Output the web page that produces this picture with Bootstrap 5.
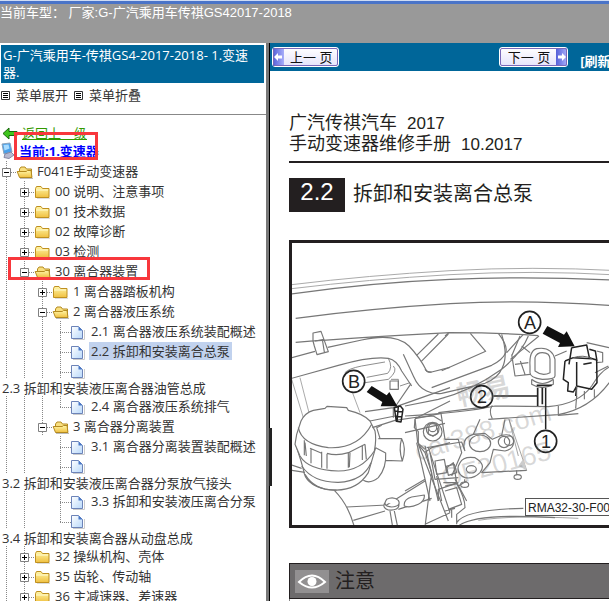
<!DOCTYPE html>
<html lang="zh-CN">
<head>
<meta charset="utf-8">
<meta name="viewport" content="width=device-width, initial-scale=1">
<title>G-广汽乘用车传祺GS4 2017-2018 维修手册</title>
<link rel="stylesheet" href="https://cdn.jsdelivr.net/npm/bootstrap@5.3.0/dist/css/bootstrap.min.css">
<style>
body{font:13px/17px "Open Sans","Noto Sans","Noto Sans CJK SC",sans-serif;color:#333;background:#fff}
.top-bar{flex:0 0 43px;background:#999;color:#fff;font-family:"Liberation Sans","Noto Sans CJK SC",sans-serif}
.top-bar::before{content:"";display:block;height:4px;background:linear-gradient(#cfdcf4 0 1px,#4a74c8 1px)}
.side{flex:0 0 266px;border-top:2px solid #fff}
.side-title{background:#069;color:#fff;margin:0 2px 0 1px;padding:2px 2px}
.side-tools{height:32px;border-bottom:1px solid #888;padding-left:1px}
.tool-btn{border:0;background:none;padding:0;color:#333}
.tool-btn svg{margin-right:6px}
.tool-btn + .tool-btn{margin-left:6px}
.splitter{flex:0 0 4px;background:linear-gradient(to right,#777 0 3px,#000 3px)}
.splitter-grip{left:3px;top:385px;width:3px;height:58px;background:#222}
.main-bar{height:28px;background:#069;padding:0 0 0 2px}
.page-btn{height:20px;border:1px solid #fff;outline:1px solid #7a68b8;outline-offset:-2px;border-radius:3px;background:linear-gradient(#fff,#e4e3fa);padding:0;color:#111;font-family:"Liberation Sans","Noto Sans CJK SC",sans-serif;font-size:13px}
.page-btn svg{display:block}
.page-btn span{padding:0 5px 0 6px}
.next-gap{margin-left:160px}
.next-gap span{padding:0 6px 0 8px}
.refresh{color:#fff;font-weight:bold;margin-left:12px}
.tree{padding-top:9px}
.tree li{height:20px;display:flex;align-items:center;white-space:nowrap;position:relative}
.tree li.short{height:18px}
.tree li.wrapped{height:17px;padding-left:2px}
.tree a{color:#333;text-decoration:none;margin-left:1px;line-height:18px}
.tree a.chosen{background:#c1d2ee;padding:0 2px;margin-left:-1px}
.tree li.back{height:17px}
.tree .back a{color:#390;text-decoration:underline;margin-left:2px}
.tree .here a{color:#00f;font-weight:bold}
.gut{flex:0 0 18px;height:100%;position:relative}
.line,.leaf,.end{background:repeating-linear-gradient(#888 0 1px,transparent 1px 2px) 6px 0/1px 100% no-repeat}
.leaf,.end{background:repeating-linear-gradient(#888 0 1px,transparent 1px 2px) 6px 0/1px 100% no-repeat,repeating-linear-gradient(to right,#888 0 1px,transparent 1px 2px) 6px 11px/11px 1px no-repeat}
.end{background-size:1px 12px,11px 1px}
.knob{border:0;padding:0;background:repeating-linear-gradient(#888 0 1px,transparent 1px 2px) 6px 0/1px 100% no-repeat,repeating-linear-gradient(to right,#888 0 1px,transparent 1px 2px) 11px 11px/6px 1px no-repeat}
.tree svg{flex:none;display:block}
.tree svg,symbol{overflow:visible}
.frame-red{position:absolute;border:3px solid #f8373c;pointer-events:none}
.frame-here{left:14px;top:-9px;width:84px;height:28px}
.frame-clutch{left:8px;top:-4px;width:142px;height:23px}
.doc{padding:42px 0 0 19px;color:#231f20;font-family:"Liberation Sans","Noto Sans CJK SC",sans-serif}
.doc-head{font-size:18px;line-height:21px;border-bottom:2px solid #231f20;padding-bottom:6px;white-space:nowrap}
.doc-head .num{font-size:17px;margin-left:10px}
.chap{padding:15px 0 28px}
.chap-no{background:#231f20;color:#fff;font-size:24px;line-height:28px;width:56px;height:34px}
.chap h1{font-size:20px;line-height:32px;margin:0 0 0 8px;font-weight:400}
.figure-box{border:3px solid #231f20;border-right:0;height:288px;margin-bottom:35px}
.notice{background:#6d6b6c;border:1px solid #231f20;border-right:0;height:36px;padding-left:5px}
.notice h2{font-size:20px;font-weight:400;line-height:30px;margin:0 0 0 6px}
.notice-body{border-left:1px solid #888;height:40px}
</style>
<script src="https://cdn.jsdelivr.net/npm/bootstrap@5.3.0/dist/js/bootstrap.bundle.min.js"></script>
</head>
<body class="vh-100 overflow-hidden d-flex flex-column">
<svg width="0" height="0" class="position-absolute" aria-hidden="true">
<defs>
<linearGradient id="gold" x2="0" y2="1"><stop stop-color="#fff6a8"/><stop offset="1" stop-color="#f0c040"/></linearGradient>
<linearGradient id="paper" x2="1" y2="1"><stop stop-color="#fff"/><stop offset="1" stop-color="#b8d8fa"/></linearGradient>
<linearGradient id="lilac" x2="1"><stop stop-color="#5560d8"/><stop offset="1" stop-color="#a8aefa"/></linearGradient>
<symbol id="plus" viewBox="0 0 18 20"><path d="M2.500 7.500h8v8h-8z" fill="#fff" stroke="#808080"/><path d="M4 11.500h5M6.500 9v5" stroke="#000"/></symbol>
<symbol id="minus" viewBox="0 0 18 20"><path d="M2.500 7.500h8v8h-8z" fill="#fff" stroke="#808080"/><path d="M4 11.500h5" stroke="#000"/></symbol>
<symbol id="folder" viewBox="0 0 18 20"><path d="M1 17h13v1H1z" fill="#ddd"/><path d="M-.5 7.500l1-2h4.500l1.500 2h6.500v9h-13.500z" fill="url(#gold)" stroke="#bf9020"/><path d="M0 9h12" stroke="#fffbd0"/></symbol>
<symbol id="folder-open" viewBox="0 0 18 20"><path d="M2 17.500h13" stroke="#bbb"/><path d="M1.500 15v-7l1.500-2h4l1.500 2h5v8z" fill="#f9e080" stroke="#b48a20"/><path d="M-.8 10.500h9l1.300-1h3.500l1 7h-12.500z" fill="url(#gold)" stroke="#b48a20"/></symbol>
<symbol id="page" viewBox="0 0 18 20"><path d="M1 18.500h11.500V9" stroke="#ccc" fill="none"/><path d="M-.5 5.500h7l4 4v8h-11z" fill="url(#paper)" stroke="#6c83b8"/><path d="M6.500 5.500v4h4z" fill="#4878c8"/></symbol>
</defs>
</svg>

<header class="top-bar"><div>当前车型： 厂家:G-广汽乘用车传祺GS42017-2018</div></header>

<div class="d-flex flex-grow-1 overflow-hidden">
<nav class="side overflow-hidden" aria-label="目录">
<div class="side-title">G-广汽乘用车-传祺GS4-2017-2018- 1.变速器.</div>
<div class="side-tools d-flex align-items-start pt-1">
<button type="button" class="tool-btn d-flex align-items-center"><svg width="9" height="9"><path d="M.5.500h8v8h-8z" fill="#fff" stroke="#333"/><path d="M2 2.500h5M2 4.500h5M2 6.500h5" stroke="#000"/></svg>菜单展开</button>
<button type="button" class="tool-btn d-flex align-items-center"><svg width="9" height="9"><path d="M.5.500h8v8h-8z" fill="#fff" stroke="#333"/><path d="M2 2.500h5M2 4.500h5M2 6.500h5" stroke="#000"/></svg>菜单折叠</button>
</div>
<ul class="tree list-unstyled m-0">
<li class="back"><svg width="20" height="17"><path d="M3 9.500L9 4v3.500h8l-2 2 2 2H9V15z" fill="#3fc51c" stroke="#17680a"/></svg><a href="#">返回上一级</a></li>
<li class="here"><svg width="18" height="20"><path d="M2 3l8-1 2 9-8 2z" fill="#4aa0ea" stroke="#8ba2ba"/><path d="M3.500 4l5-.5 1 4-5 2z" fill="#a9dcff"/><path d="M5 13l6-2 3 3-5 3.500-5-1z" fill="#b7b9d0" stroke="#8587a4"/></svg><a href="#">当前:1.变速器</a><span class="frame-red frame-here"></span></li>
<li><button type="button" class="gut knob" aria-label="折叠"><svg width="18" height="20"><use href="#minus"/></svg></button><svg width="18" height="20"><use href="#folder-open"/></svg><a href="#">F041E手动变速器</a></li>
<li><i class="gut line"></i><button type="button" class="gut knob" aria-label="展开"><svg width="18" height="20"><use href="#plus"/></svg></button><svg width="18" height="20"><use href="#folder"/></svg><a href="#">00 说明、注意事项</a></li>
<li><i class="gut line"></i><button type="button" class="gut knob" aria-label="展开"><svg width="18" height="20"><use href="#plus"/></svg></button><svg width="18" height="20"><use href="#folder"/></svg><a href="#">01 技术数据</a></li>
<li><i class="gut line"></i><button type="button" class="gut knob" aria-label="展开"><svg width="18" height="20"><use href="#plus"/></svg></button><svg width="18" height="20"><use href="#folder"/></svg><a href="#">02 故障诊断</a></li>
<li><i class="gut line"></i><button type="button" class="gut knob" aria-label="展开"><svg width="18" height="20"><use href="#plus"/></svg></button><svg width="18" height="20"><use href="#folder"/></svg><a href="#">03 检测</a></li>
<li><i class="gut line"></i><button type="button" class="gut knob" aria-label="折叠"><svg width="18" height="20"><use href="#minus"/></svg></button><svg width="18" height="20"><use href="#folder-open"/></svg><a href="#">30 离合器装置</a><span class="frame-red frame-clutch"></span></li>
<li><i class="gut line"></i><i class="gut line"></i><button type="button" class="gut knob" aria-label="展开"><svg width="18" height="20"><use href="#plus"/></svg></button><svg width="18" height="20"><use href="#folder"/></svg><a href="#">1 离合器踏板机构</a></li>
<li><i class="gut line"></i><i class="gut line"></i><button type="button" class="gut knob" aria-label="折叠"><svg width="18" height="20"><use href="#minus"/></svg></button><svg width="18" height="20"><use href="#folder-open"/></svg><a href="#">2 离合器液压系统</a></li>
<li><i class="gut line"></i><i class="gut line"></i><i class="gut line"></i><i class="gut leaf"></i><svg width="18" height="20"><use href="#page"/></svg><a href="#">2.1 离合器液压系统装配概述</a></li>
<li><i class="gut line"></i><i class="gut line"></i><i class="gut line"></i><i class="gut leaf"></i><svg width="18" height="20"><use href="#page"/></svg><a href="#" class="chosen">2.2 拆卸和安装离合总泵</a></li>
<li class="short"><i class="gut line"></i><i class="gut line"></i><i class="gut line"></i><i class="gut leaf"></i><svg width="18" height="20"><use href="#page"/></svg></li>
<li class="wrapped"><a href="#" class="m-0">2.3 拆卸和安装液压离合器油管总成</a></li>
<li><i class="gut line"></i><i class="gut line"></i><i class="gut line"></i><i class="gut end"></i><svg width="18" height="20"><use href="#page"/></svg><a href="#">2.4 离合器液压系统排气</a></li>
<li><i class="gut line"></i><i class="gut line"></i><button type="button" class="gut knob" aria-label="折叠"><svg width="18" height="20"><use href="#minus"/></svg></button><svg width="18" height="20"><use href="#folder-open"/></svg><a href="#">3 离合器分离装置</a></li>
<li><i class="gut line"></i><i class="gut line"></i><i class="gut"></i><i class="gut leaf"></i><svg width="18" height="20"><use href="#page"/></svg><a href="#">3.1 离合器分离装置装配概述</a></li>
<li class="short"><i class="gut line"></i><i class="gut line"></i><i class="gut"></i><i class="gut leaf"></i><svg width="18" height="20"><use href="#page"/></svg></li>
<li class="wrapped"><a href="#" class="m-0">3.2 拆卸和安装液压离合器分泵放气接头</a></li>
<li><i class="gut line"></i><i class="gut line"></i><i class="gut"></i><i class="gut leaf"></i><svg width="18" height="20"><use href="#page"/></svg><a href="#">3.3 拆卸和安装液压离合分泵</a></li>
<li class="short"><i class="gut line"></i><i class="gut line"></i><i class="gut"></i><i class="gut end"></i><svg width="18" height="20"><use href="#page"/></svg></li>
<li class="wrapped"><a href="#" class="m-0">3.4 拆卸和安装离合器从动盘总成</a></li>
<li><i class="gut line"></i><button type="button" class="gut knob" aria-label="展开"><svg width="18" height="20"><use href="#plus"/></svg></button><svg width="18" height="20"><use href="#folder"/></svg><a href="#">32 操纵机构、壳体</a></li>
<li><i class="gut line"></i><button type="button" class="gut knob" aria-label="展开"><svg width="18" height="20"><use href="#plus"/></svg></button><svg width="18" height="20"><use href="#folder"/></svg><a href="#">35 齿轮、传动轴</a></li>
<li><i class="gut line"></i><button type="button" class="gut knob" aria-label="展开"><svg width="18" height="20"><use href="#plus"/></svg></button><svg width="18" height="20"><use href="#folder"/></svg><a href="#">36 主减速器、差速器</a></li>
</ul>
</nav>
<div class="splitter position-relative"><span class="splitter-grip position-absolute"></span></div>

<main class="flex-grow-1 overflow-hidden">
<div class="main-bar d-flex align-items-center text-nowrap">
<button type="button" class="page-btn d-flex align-items-center flex-shrink-0"><svg width="11" height="18"><rect width="11" height="18" fill="url(#lilac)"/><path d="M1 9l4-4v2.500h4v3H5V13z" fill="#fff"/></svg><span>上一 页</span></button>
<button type="button" class="page-btn next-gap d-flex align-items-center flex-shrink-0"><span>下一 页</span><svg width="11" height="18"><rect width="11" height="18" fill="url(#lilac)"/><path d="M10 9L6 5v2.500H2v3h4V13z" fill="#fff"/></svg></button>
<a href="#" class="refresh text-decoration-none pt-2">[刷新]</a>
</div>
<article class="doc">
<div class="doc-head"><div>广汽传祺汽车<span class="num">2017</span></div><div>手动变速器维修手册<span class="num">10.2017</span></div></div>
<div class="chap d-flex text-nowrap"><span class="chap-no text-center flex-shrink-0">2.2</span><h1>拆卸和安装离合总泵</h1></div>
<div class="figure-box overflow-hidden">
<svg class="d-block" width="100%" height="282" role="img" aria-label="离合总泵安装位置">
<g transform="translate(-7 -7) scale(.33333)" fill="none" stroke="#777" stroke-width="3.500" stroke-linejoin="round">
<g><!-- cowl and hood edge -->
<path d="M20 146Q250 118 495 104T1000 104M20 158Q250 130 495 116T1000 117" stroke="#999" stroke-width="2.500"/>
<path d="M20 174Q250 140 495 130T1000 133M32 247Q260 217 495 203T1000 210"/>
<path d="M32 319Q200 306 495 290Q650 290 760 299M20 365L90 346M128 334L230 312Q330 290 372 330Q405 365 425 405Q430 410 440 408L495 394"/>
<path d="M84 291L108 286L130 347L96 356L88 330L84 315zM90 315L118 310M112 310l6 38"/>
<path d="M20 427L160 388Q260 360 310 367Q335 372 350 405L380 450M395 358L460 294M409 376L490 294"/>
<path d="M180 410Q190 398 230 390L300 378M310 367Q325 395 308 412L245 424M240 440L310 430Q340 405 325 390M318 430h22v22M345 450L375 440" stroke-width="2.500"/>
<path d="M20 430L58 555M45 425L72 530M180 410L225 530" stroke-width="2.500" stroke="#999"/>
</g>
<g transform="translate(480 0)"><!-- hoses behind the bracket -->
<path d="M76 292L122 346L-10 404M160 292Q190 330 182 350Q174 370 140 388L-40 455M235 295L185 350M282 300L196 370M0 300l12-10"/>
</g>
<g transform="translate(360 300)">
<path d="M-5 55L25 120Q40 155 65 165Q85 175 110 172L240 142Q280 125 292 95Q310 60 290-5M60 100Q65 110 80 108M0 210L100 190Q200 165 290 100Q350 50 370 0"/>
<path d="M0 240Q180 230 270 210L430 212Q520 205 560 150Q590 100 620 90M0 290L120 262M250 250L460 236Q560 218 620 130"/>
<path d="M262 208Q250 225 262 248M30 248L108 232L120 310L160 310L170 350L140 420M30 248L38 320L60 340M100 230L250 212"/>
</g>
<g transform="translate(360 300)"><!-- elbow fitting -->
<path d="M375 90Q372 45 395 38Q440 30 450 70V120Q450 130 412 130Q375 125 375 110zM390 105V65Q395 50 412 50Q435 50 435 70V110Q412 122 390 105z" fill="#fff"/>
<path d="M320 55l10 65l45-5M330 85l40-5M350 30l25 20M450 60l35-15M345 0l-25 60M380 130Q412 155 445 130M380 130v15Q412 165 445 145v-15M360 115l-14-40"/>
<path d="M395 148h45M398 155v55M412 155v50" stroke="#222" stroke-width="5"/>
<path d="M460 210v28l60-5M512 218L515 180M570 110l40-20M545 20L612 35M575 45l18 5v28l-18 2"/>
</g>
<g transform="translate(360 300)" stroke="#222" stroke-width="4.500"><!-- connector -->
<path d="M500 35L545 27L553 65L575 72L576 140L560 160L515 150L512 180M553 40l18 5l5 30M500 35l-8 50M480 75L505 65L560 68M480 75L475 130L490 140L488 165L505 168L515 150V78M535 85L560 80"/>
<path d="M515 150V185M538 165V190M568 160V185M505 65Q535 55 560 68" stroke="#666" stroke-width="3"/>
</g>
<g transform="translate(0 435)"><!-- reservoir with ribbed cap -->
<path d="M32 190L48 240L55 265Q60 310 120 324Q210 340 250 275L272 200"/>
<path d="M50 255Q85 305 160 304Q235 300 258 245M60 280Q90 330 155 327"/>
<path d="M35 160L48 120Q60 95 85 88L120 82L126 76L185 80L190 88Q235 98 255 120L270 150Q275 175 268 210Q230 270 160 270Q70 268 45 225L30 190z" fill="#fff"/>
<path d="M40 140Q50 190 130 200Q220 205 260 130M60 185l4 40M78 205v42M110 212v48M126 218v45M190 215v45M195 215l-2 44M232 195v42M240 190l4 45M58 178v45M75 202l35 15M126 217Q155 226 190 215L240 190"/>
<path d="M280 173H350Q365 200 352 240L300 238M350 173Q340 205 352 240M285 172L275 140L290 133M272 200L302 216Q305 260 280 290Q255 310 235 298"/>
<path d="M240 92L325 80L495 20M262 140L330 118L400 108L495 60M325 80V110M330 78L378 8M255 120L330 105"/>
<path d="M20 252L50 262M20 268l40 6M148 328Q190 370 208 438M185 378L305 372L420 300M205 418L300 390M340 385L440 352M315 390L323 438M328 390L338 438"/>
<path d="M300 365Q290 380 310 387Q342 390 342 370M305 355Q325 345 340 358Q350 375 320 378Q290 375 305 355zM358 375Q355 355 380 348L418 342Q420 360 400 370Q375 382 358 375z" fill="#fff"/>
<path d="M390 110L445 105L470 120M390 115L388 140L400 152V190L420 215L440 275L420 438M400 190L490 420M430 200L495 395M418 215L440 200L495 185M420 430L495 395M315 0h25v25h-25z"/>
</g>
<g transform="translate(360 300)"><!-- gearbox housing -->
<path d="M35 320L75 495M60 330L100 495M65 335L170 318L180 345M75 350L90 430L160 425M90 375L118 370L125 410L95 415zM125 390L148 385L155 410L130 418zM95 420L110 495M150 430L185 495M0 465L60 430"/>
<path d="M178 340Q170 305 205 295L240 292L262 310L290 298Q325 290 326 318Q325 340 300 345L265 340L255 380L230 410L365 403M205 295L225 250M300 250L290 298M165 380Q175 360 210 365Q245 385 225 410Q205 430 180 425Q155 415 160 390zM100 495V460L160 440"/>
<ellipse cx="225" cy="322" rx="32" ry="25"/><ellipse cx="199" cy="400" rx="15" ry="11"/><circle cx="312" cy="314" r="14"/><circle cx="297" cy="318" r="17"/>
<ellipse cx="338" cy="423" rx="11" ry="7"/><path d="M335 403v14M179 430v10"/><ellipse cx="179" cy="446" rx="12" ry="8"/>
<path d="M312 250L365 403L345 404M312 250L340 360" stroke-width="2"/><path d="M340 390l25 13-10-35z" fill="#ccc" stroke="none"/>
<circle cx="83" cy="287" r="28"/><circle cx="83" cy="280" r="19"/><circle cx="83" cy="275" r="12"/><path d="M70 278v15l14 8 14-10V275"/>
</g>
<g transform="translate(480 435)">
<path d="M0 315L35 308Q60 350 60 380L35 400V430M40 315L65 300M0 330L35 320L50 370L10 385M35 425Q60 385 235 382M40 435Q90 395 330 410M-5 305H35M0 390l30-8M20 385v25M5 260l20-15 10 60"/>
<path d="M100 418Q200 402 400 412" stroke-width="2"/>
</g>
<g stroke="#222" stroke-width="4.500"><!-- hose clip -->
<path d="M328 515l18-5 8 10-6 38-14-2zM330 525l22 2M332 540l20 2M340 512l-4 44"/>
<path d="M625 480H758M782 455V580"/>
</g>
<g fill="#111" stroke="none"><path d="M787 270l50 26 8-10 24 45-50 2 6-12-52-28z"/><path d="M260 450l45 28 8-10 24 43-50 0 5-13-47-30z"/></g>
<g fill="#fff" stroke="#222" stroke-width="5"><circle cx="734" cy="259" r="33"/><circle cx="206" cy="436" r="33"/><circle cx="590" cy="482" r="33"/><circle cx="782" cy="616" r="33"/></g>
</g>
<g fill="#777" fill-opacity=".28" font-size="27" font-family="Liberation Sans,Noto Sans CJK SC,sans-serif">
<text transform="translate(167 163) rotate(-12)" font-weight="bold">畅易</text>
<text transform="translate(126 218) rotate(-17)">car388.com</text>
<text transform="translate(152 245) rotate(-15)">QF20165</text>
</g>
<g font-family="Liberation Sans,sans-serif" font-size="18" text-anchor="middle" fill="#222"><text x="238" y="86">A</text><text x="62" y="145">B</text><text x="190" y="160">2</text><text x="254" y="205">1</text></g>
<rect x="233.500" y="255.500" width="120" height="17" fill="#fff" stroke="#555"/>
<text x="236" y="269" font-family="Liberation Sans,sans-serif" font-size="12" fill="#222">RMA32-30-F00</text>
</svg>
</div>
<section>
<div class="notice d-flex align-items-center"><svg width="34" height="23"><rect width="34" height="23" fill="#929091"/><path d="M4 12Q17-1 30 12Q17 23 4 12z" fill="none" stroke="#fff" stroke-width="2"/><circle cx="17" cy="11.500" r="4.500" fill="#fff"/></svg><h2>注意</h2></div>
<div class="notice-body"></div>
</section>
</article>
</main>
</div>
</body>
</html>
